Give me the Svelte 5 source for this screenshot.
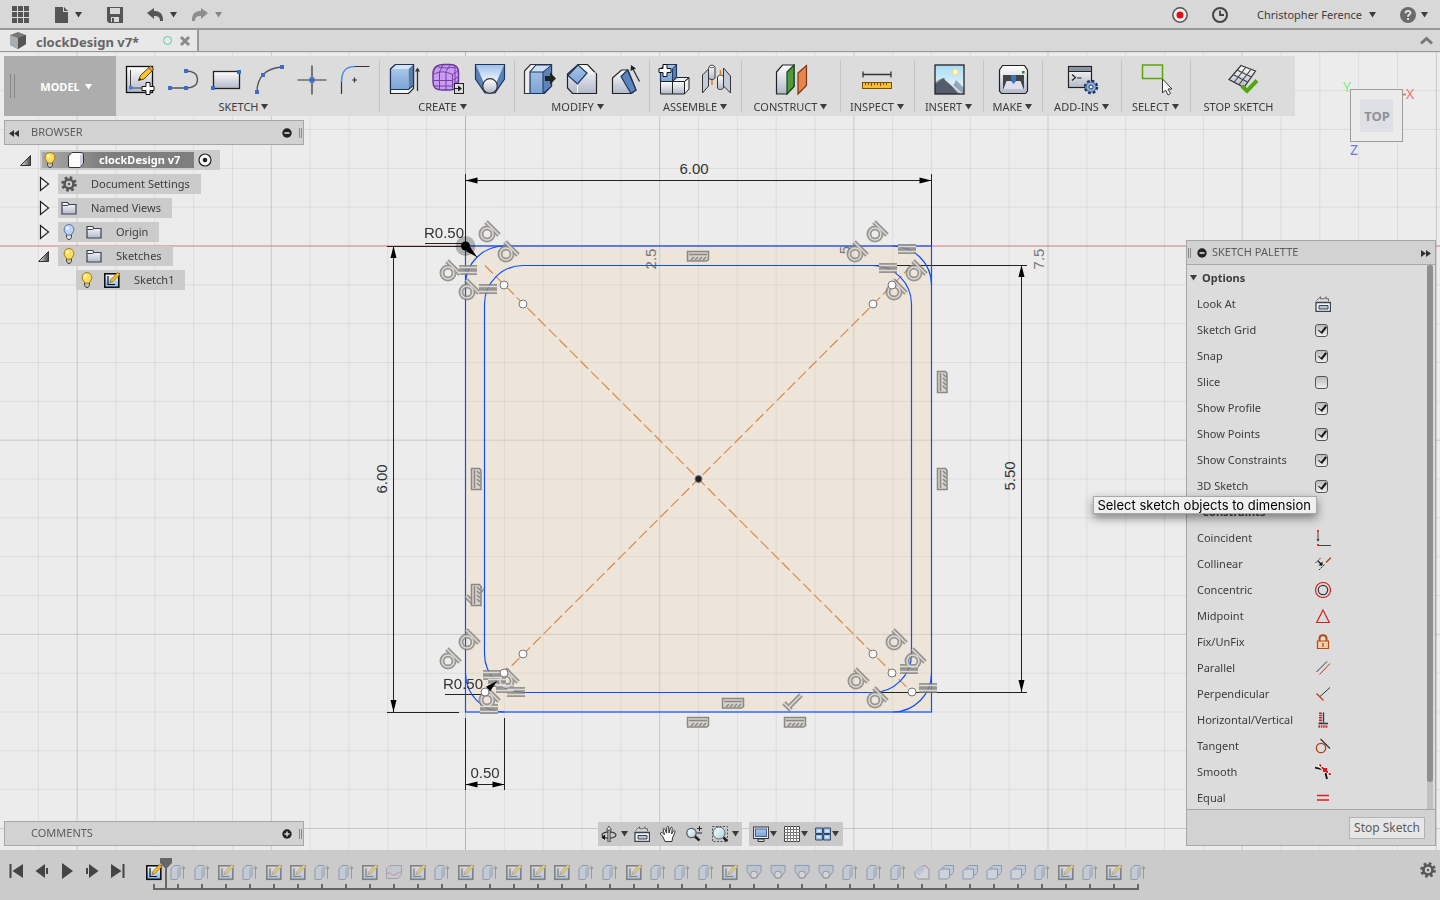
<script lang="ts">
	type Tool = { label: string; icons: string[]; width: number; menu: boolean };

	// 36x36 toolbar icons
	const tools: Record<string, string> = {
		sketch: `<rect x="4.500" y="4.500" width="26" height="26" fill="url(#steel)" stroke="#111" stroke-width="1.300"/><path d="M8.500 8v18H20" fill="none" stroke="#444"/><rect x="7" y="24" width="3.500" height="3.500" fill="#3d7de0"/><path d="M16.500 18.500l2-5L28 4.500l3.500 3-9.500 9.500z" fill="#ffc629" stroke="#5a4010"/><path d="M26.500 6l3.200 3 2-2-3.200-3z" fill="#d9a07c" stroke="#5a4010" stroke-width=".8"/><path d="M16.500 18.500l1-3 2 2z" fill="#222"/><path d="M24 20.500h4v4h4v4h-4v4h-4v-4h-4v-4h4z" fill="#fff" stroke="#111"/>`,
		line: `<path d="M5 26h16c6 0 11.500-2 11.500-8.500S27 9 21 9" fill="none" stroke="#555" stroke-width="1.300"/><path d="M3 24h4v4H3zM19 24h4v4h-4zM19 7h4v4h-4z" fill="#3d6ccc"/>`,
		rect: `<rect x="5.500" y="9.500" width="26" height="17" fill="url(#steel)" stroke="#222" stroke-width="1.300"/><path d="M3 24h4v4H3zM29 8h4v4h-4z" fill="#3d6ccc"/>`,
		arc: `<path d="M6 30C6 15 15 6 31 5" fill="none" stroke="#555" stroke-width="1.300"/><path d="M4 28h4v4H4zM10 11h4v4h-4zM29 3h4v4h-4z" fill="#3d6ccc"/>`,
		point: `<path d="M18 3.500v29M3.500 18h29" stroke="#333" stroke-width="1.200"/><rect x="15.500" y="15.500" width="5" height="5" fill="#3d6ccc"/>`,
		fillet: `<path d="M4.500 32V20M17 4.500h15.500" stroke="#333" stroke-width="1.200"/><path d="M4.500 20C4.500 10 8 4.500 18 4.500" fill="none" stroke="#4a90e8" stroke-width="1.600"/><path d="M17.500 15.500v5M15 18h5" stroke="#333" stroke-width="1.200"/>`,
		extrude: `<path d="M4.500 7l5-4.500h18v24l-5 5h-18z" fill="#f4f4f6" stroke="#222" stroke-width="1.200"/><path d="M4.500 7h18v20h-18z" fill="url(#blue)"/><path d="M4.500 7l5-4.500h18L22.500 7z" fill="#d5e5f6"/><path d="M22.500 7l5-4.500v20.500l-5 4.500z" fill="#587fae"/><path d="M4.500 7l5-4.500h18v21l-5 4H4.500z" fill="none" stroke="#1d3562" stroke-width="1.200"/><path d="M31.500 29V7" stroke="#333" stroke-width="1.300"/><path d="M29 9.500L31.500 5.500 34 9.500z" fill="#333"/>`,
		form: `<path d="M4 12c0-6 4-9.500 11-9.500h6c6 0 8.500 2.500 8.500 8V19c0 6-3 9-9 9h-7c-7 0-9.500-2.500-9.500-8z" fill="#c99cf2" stroke="#6a3a9a" stroke-width="1.500"/><path d="M4.500 12.500c6-3.500 12-3.500 19 0v14M10.500 9.500V28M17 9.500V28M5 18.500h18.500M5 24h18M9 5c5 1.500 12 1 19 0M23.500 12.500L29 9M23.500 18.500l6-4M23 24l6-5M14 3l-3.500 7M21 3l-4 6.500M26 5v20" fill="none" stroke="#7540a8"/><rect x="25.500" y="21.500" width="9" height="10" fill="#ddd" stroke="#222"/><path d="M26 26.500h4" stroke="#222"/><path d="M29 23.500l4 3-4 3z" fill="#222"/>`,
		loft: `<path d="M3.500 2.500h29V17L23 31H13L3.500 17z" fill="#5b82b8" stroke="#1d3562" stroke-width="1.200"/><path d="M4 3l8.500 19c3-5 8-5 11 0L32 3z" fill="url(#sky)"/><circle cx="18" cy="24" r="7.300" fill="url(#steel)" stroke="#333" stroke-width="1.200"/>`,
		press: `<path d="M3.500 9l6-6.500h21V24l-7 7.500h-20z" fill="#eee" stroke="#333" stroke-width="1.200"/><path d="M9 10l6-7h15.500V24l-8.500 7.500H9z" fill="url(#blue)" stroke="#1d3562" stroke-width="1.200"/><path d="M22 10l8.500-7.500V24L22 31.500z" fill="#5d84b8" stroke="#1d3562"/><path d="M9 10l6-7h15.500L22 10z" fill="#cfe0f4" stroke="#1d3562"/><path d="M24 14h5v-3.500l6 6-6 6V19h-5z" fill="#222"/>`,
		chamfer: `<path d="M3.500 12v14l5 5.500h24V12l-9-9.500H14z" fill="url(#steel)" stroke="#222" stroke-width="1.200"/><path d="M13.500 22v9M22.500 11h9.500" stroke="#fff"/><path d="M4 13.500L14 3l9 8-9.500 11z" fill="url(#blue)" stroke="#1d3562" stroke-width="1.200"/>`,
		draft: `<path d="M5.500 16l9-8H21l8 20-4.500 3.500h-19z" fill="url(#steel)" stroke="#222" stroke-width="1.200"/><path d="M14 14.500L20.500 8 29 28l-5 3.500z" fill="#5d84b8" stroke="#1d3562" stroke-width="1.200"/><path d="M32.500 19.500L26 7" stroke="#333" stroke-width="1.300"/><path d="M23.500 9L24 3l5 3.500z" fill="#222"/>`,
		component: `<path d="M4.500 7l5-4.500h11v12l-4 5h-12z" fill="url(#blue)" stroke="#1d3562" stroke-width="1.200"/><path d="M16.500 7l4-4.500v12l-4 5z" fill="#587fae" stroke="#1d3562"/><path d="M4.500 19.500h12V32h-12zM16.500 19.500h12V32h-12z" fill="url(#steel)" stroke="#222"/><path d="M16.500 19.500l4.500-4h12l-4.500 4zM28.500 19.500l4.500-4V27l-4.500 5z" fill="#f2f2f5" stroke="#222"/><path d="M7 2.500h4v4h4v4h-4v4H7v-4H3v-4h4z" fill="#fff" stroke="#111"/>`,
		joint: `<path d="M3.500 13l6-6v17l-6 7z" fill="#c3cad8" stroke="#333"/><path d="M9.500 6.500c1-4 6-4 6.500-1V16c-1 2-5 2-6.500 0z" fill="url(#steel)" stroke="#333"/><ellipse cx="12.800" cy="4.500" rx="2.500" ry="1.300" fill="#fff" stroke="#333" stroke-width=".8"/><path d="M13 18v5" stroke="#e87a1e" stroke-width="1.500"/><path d="M18.500 16c0-3.500 5-4 6-1v11c-1.500 2-5 2-6 0z" fill="url(#steel)" stroke="#333"/><path d="M21.500 8v5" stroke="#e87a1e" stroke-width="1.500"/><path d="M24.500 6l7 8v17l-7-7z" fill="#c3cad8" stroke="#333"/>`,
		plane: `<path d="M3.500 10l6-7H21v21.500L14 32H3.500z" fill="url(#steel)" stroke="#222" stroke-width="1.200"/><path d="M14 10l7-7v21.500L14 32z" fill="#4f9a3c" stroke="#17461a" stroke-width="1.200"/><path d="M25 11l8.500-7.500v20L25 32z" fill="#e8864a" stroke="#7c3410" stroke-width="1.200"/>`,
		ruler: `<path d="M4 9.500v6M32 9.500v6M4 12.500h28" stroke="#333" stroke-width="1.300"/><rect x="3.500" y="20.500" width="29" height="6" fill="#f6be32" stroke="#7a4f08"/><path d="M6.500 21v2M9.500 21v2M12.500 21v3M15.500 21v2M18.500 21v2M21.500 21v3M24.500 21v2M27.500 21v2" stroke="#7a4f08"/>`,
		picture: `<rect x="4" y="3" width="29" height="29" fill="url(#sky2)"/><circle cx="24.500" cy="10" r="3" fill="#fff8c8" stroke="#f8d58c"/><path d="M4 20l5-3 5-1 8 8 3-6 8 8v6H4z" fill="#94a6ba"/><path d="M4 22l8-6 9 8 6 8H4z" fill="#555d6b"/><path d="M14 17l17 15" stroke="#dfe8f0" stroke-width="1.500"/><rect x="4" y="3" width="29" height="29" fill="none" stroke="#222" stroke-width="1.300"/>`,
		printer: `<path d="M4.500 8l3-4.500h22l3 4.500v21l-2 2.500h-24l-2-2.500z" fill="url(#steel)" stroke="#222" stroke-width="1.200"/><rect x="8" y="13" width="21" height="14" fill="#444"/><path d="M11.500 19h14l3 8h-20z" fill="#dde"/><path d="M16 13h5v6l-2.500 3-2.500-3z" fill="#3474c4"/><rect x="27" y="9" width="2.500" height="2.500" fill="#1c8a1c"/>`,
		addins: `<rect x="4.500" y="4.500" width="23" height="21" fill="url(#steel)" stroke="#222" stroke-width="1.200"/><path d="M4.500 4.500h23v5h-23z" fill="#8b93a4" stroke="#222"/><path d="M8 12.500l3.500 3L8 18.500M13 16h4.500" fill="none" stroke="#222" stroke-width="1.200"/><circle cx="27" cy="25" r="6" fill="#9db9e6" stroke="#1d3562" stroke-width="2.500" stroke-dasharray="2.700 2"/><circle cx="27" cy="25" r="5" fill="#8eaee2" stroke="#1d3562" stroke-width=".6"/><circle cx="27" cy="25" r="2" fill="#fff" stroke="#1d3562"/>`,
		select: `<rect x="4.500" y="3" width="20" height="13.500" fill="none" stroke="#5aa60a" stroke-width="1.500"/><path d="M24.500 17v14l3-3 2.500 5 2.500-1.500L30 27h4z" fill="#fff" stroke="#333"/>`,
		finish: `<path d="M16 3.500L30.500 9 19 25.500 4 17.500z" fill="url(#steel)" stroke="#333" stroke-width="1.200"/><path d="M21 5L9 20.500M26 7.500L14 22.500M12 8l14.500 7M8 12.500l14.500 7.500" stroke="#444" stroke-width="1.200"/><path d="M17 24l5 5L32 18.500" fill="none" stroke="#55a510" stroke-width="4"/>`
	};

	const groups: Tool[] = [
		{ label: 'SKETCH', icons: ['sketch', 'line', 'rect', 'arc', 'point', 'fillet'], width: 263, menu: true },
		{ label: 'CREATE', icons: ['extrude', 'form', 'loft'], width: 135, menu: true },
		{ label: 'MODIFY', icons: ['press', 'chamfer', 'draft'], width: 135, menu: true },
		{ label: 'ASSEMBLE', icons: ['component', 'joint'], width: 92, menu: true },
		{ label: 'CONSTRUCT', icons: ['plane'], width: 99, menu: true },
		{ label: 'INSPECT', icons: ['ruler'], width: 74, menu: true },
		{ label: 'INSERT', icons: ['picture'], width: 69, menu: true },
		{ label: 'MAKE', icons: ['printer'], width: 59, menu: true },
		{ label: 'ADD-INS', icons: ['addins'], width: 79, menu: true },
		{ label: 'SELECT', icons: ['select'], width: 69, menu: true },
		{ label: 'STOP SKETCH', icons: ['finish'], width: 105, menu: false }
	];

	// 16x16 icons
	const small: Record<string, string> = {
		apps: `<path d="M0 0h5v5H0zM6 0h5v5H6zM12 0h5v5h-5zM0 6h5v5H0zM6 6h5v5H6zM12 6h5v5h-5zM0 12h5v5H0zM6 12h5v5H6zM12 12h5v5h-5z" fill="#555"/>`,
		file: `<path d="M1 0h8v5h5v11H1zM10 0l4 4h-4z" fill="#555"/>`,
		save: `<path d="M0 0h16v16H2l-2-2z" fill="#555"/><path d="M3 1h10v6H3zM4 10h8v5H4z" fill="#d8d8d8"/><path d="M5 11h2v4H5z" fill="#555"/>`,
		undo: `<path d="M0 6l7-5v3c5 0 9 2 9 9v1h-3c0-4-2-5-6-5v3z" fill="#555"/>`,
		redo: `<path d="M16 6L9 1v3c-5 0-9 2-9 9v1h3c0-4 2-5 6-5v3z" fill="#8d8d8d"/>`,
		record: `<circle cx="8" cy="8" r="7.200" fill="#eee" stroke="#555" stroke-width="1.500"/><circle cx="8" cy="8" r="3.500" fill="#e01010"/>`,
		clock: `<circle cx="8" cy="8" r="7" fill="none" stroke="#444" stroke-width="2"/><path d="M8 3.500V8h4" fill="none" stroke="#444" stroke-width="1.800"/>`,
		help: `<circle cx="8" cy="8" r="8" fill="#6b6b6b"/><path d="M5.500 6.300C5.500 3 10.800 3.200 10.500 6c-.2 1.700-2.500 1.600-2.500 3.700M8 11v2" fill="none" stroke="#e4e4e4" stroke-width="1.900"/>`,
		cube: `<path d="M0 3l8-3 8 3v9l-8 5-8-4z" fill="#777"/><path d="M0 3l8 3v11l-8-4z" fill="#a8adb2"/><path d="M8 6l8-3v9l-8 5z" fill="#555"/>`,
		close: `<path d="M4 4l8 8M12 4l-8 8" stroke="#8a8a8a" stroke-width="3"/>`,
		bulb: `<path d="M5.500 10.500h5v3l-1.500 2h-2l-1.500-2z" fill="#bbb" stroke="#444"/><path d="M8 .5a5 5 0 0 1 3.500 8.500L10 11H6L4.500 9A5 5 0 0 1 8 .5z" fill="#fde05a" stroke="#a8780c"/><circle cx="6.500" cy="4" r="1.800" fill="#fff6b8"/>`,
		bulbOff: `<path d="M5.500 10.500h5v3l-1.500 2h-2l-1.500-2z" fill="#ddd" stroke="#444"/><path d="M8 .5a5 5 0 0 1 3.500 8.500L10 11H6L4.500 9A5 5 0 0 1 8 .5z" fill="#c0d4fa" stroke="#5472b0"/><circle cx="6.500" cy="4" r="1.800" fill="#eef4ff"/>`,
		body: `<path d="M.5 4l3.500-3.500h9q2.500 0 2.500 2.500v8L12 15.500H2Q.5 15.500.5 14z" fill="#fbfbfb" stroke="#333"/><path d="M12 4l3-2.500V11l-3 4z" fill="#ccd"/>`,
		gear: `<circle cx="8" cy="8" r="6.500" fill="none" stroke="#555" stroke-width="2.600" stroke-dasharray="2.600 2.500"/><circle cx="8" cy="8" r="4.500" fill="none" stroke="#555" stroke-width="2.600"/><circle cx="8" cy="8" r="1.200" fill="#555"/>`,
		folder: `<path d="M1 14V2.500h5.500l1.500 2h7V14z" fill="url(#steel)" stroke="#3a4252" stroke-width="1.200"/><path d="M1.500 5.500h5l1.500-1" fill="none" stroke="#3a4252"/>`,
		pencil: `<rect x=".8" y="1.800" width="14" height="13.500" fill="url(#sheet)" stroke="#111" stroke-width="1.600"/><path d="M4 4v8.500h7" fill="none" stroke="#111" stroke-width="1.200"/><path d="M6 10.500l1-3L13.500.5 16 2.500 9 9.500z" fill="#f8c020" stroke="#8a5a10" stroke-width=".7"/>`,
		box: `<path d="M1 5l3-3.500h6V12l-3 3.500H1z" fill="#b8cde6" stroke="#3d5478"/><path d="M7 5l3-3.500V12l-3 3.500z" fill="#7f9dc4"/><path d="M13.500 15V4" stroke="#555"/><path d="M11.500 5l2-3.500 2 3.500z" fill="#555"/>`,
		split: `<path d="M.5 5L4 1.500h11.500v9L12 14.500H.5z" fill="#b4c4d8" stroke="#667"/><path d="M1 10c3-4 5 3 8 1s4-3 6-3" fill="none" stroke="#e03030"/>`,
		taper: `<path d="M1 1.500h14v6L10.500 14h-5L1 7.500z" fill="#a8c0e0" stroke="#3d5478"/><circle cx="8" cy="10.500" r="3.500" fill="#e6e6ea" stroke="#445"/>`,
		round: `<path d="M1 8l7-6h4l3 4v9H4l-3-3z" fill="#dfe3ea" stroke="#445"/><path d="M1 8l7-6 3 3-6 7z" fill="#a8c0e0"/>`,
		combine: `<path d="M4.500 4L7 1.500h8.500v7L13 11H4.500z" fill="#a8c8ee" stroke="#2c4f88"/><path d="M1 7l2-2h8.500v8l-2 2H1z" fill="#cfe0f4" stroke="#2c4f88"/>`,
		lookat: `<path d="M1 6.500h14.500v9H1z" fill="#f6f7fa" stroke="#3a4252" stroke-width="1.300"/><path d="M4 9.500h9v3.500H4z" fill="#b8c4d4" stroke="#3a4252"/><path d="M1.500 4.500L5.500.8v2h4l1.500-2v2h2.500V5" fill="#ddd" stroke="#666"/>`,
		coincident: `<path d="M3 1.500v9M3 15.500h13" stroke="#444"/><path d="M2 0h2v2H2zM2 14h2v2H2z" fill="#f03010"/><path d="M1.500 9h3L3 12z" fill="#444"/>`,
		collinear: `<path d="M.5 7L6 1.500M4 14L10 8" stroke="#333" stroke-dasharray="2 .6"/><path d="M11 6.500L16 1.500" stroke="#b83c0c" stroke-width="1.300"/><path d="M3 5l4 4" stroke="#111" stroke-width="1.300"/><path d="M7.500 5.500v4h-4z" fill="#111"/>`,
		concentric: `<circle cx="8" cy="8" r="7.500" fill="none" stroke="#d82020" stroke-width="1.200"/><circle cx="8" cy="8" r="4.700" fill="none" stroke="#334" stroke-width="1.200"/>`,
		midpoint: `<path d="M8 2L1.700 14.500h12.600z" fill="none" stroke="#d82020" stroke-width="1.200"/>`,
		fix: `<path d="M4.500 7V4.500c0-4.500 7-4.500 7 0V7" fill="none" stroke="#b84a14" stroke-width="2"/><path d="M2.500 7h11v7.500h-11z" fill="#f8d0a8" stroke="#b84a14" stroke-width="1.200"/><path d="M8 9v4" stroke="#b84a14" stroke-width="1.300"/>`,
		parallel: `<path d="M1.500 12L12 1.500" stroke="#334"/><path d="M4.500 14.500l10.500-11" stroke="#b83c0c"/>`,
		perpendicular: `<path d="M5 10.500L15 1.500" stroke="#334"/><path d="M1.500 7.500l7 7" stroke="#b83c0c" stroke-width="1.200"/>`,
		horizontal: `<path d="M8.500.5v10M3.500 11.500h9.500" stroke="#334" stroke-width="1.300"/><path d="M5.500.5v10" stroke="#d82020" stroke-width="3" stroke-dasharray="1.500 .8"/><path d="M3.500 14.500H13" stroke="#d82020" stroke-width="2.500" stroke-dasharray="1.500 .8"/>`,
		tangent: `<circle cx="6" cy="10" r="4.700" fill="none" stroke="#b83c0c" stroke-width="1.200"/><path d="M5.500 1l9.500 9.500" stroke="#334" stroke-width="1.200"/>`,
		smooth: `<path d="M0 3.500l8 2" stroke="#111" stroke-width="1.800"/><path d="M4 .5l5 5M11 7l5 4" stroke="#fff" stroke-width="3.500"/><path d="M4.500 .5l4.500 5M11 7l5 4" stroke="#c01010" stroke-width="1.800" stroke-dasharray="2.500 1"/><path d="M10.500 9l1.500 6" stroke="#111" stroke-width="1.800"/><rect x="8" y="4" width="4" height="4" fill="#f01010"/>`,
		equal: `<path d="M2 5.500h12M2 10h12" stroke="#d82020" stroke-width="1.300"/>`,
		orbit: `<ellipse cx="8" cy="9" rx="7" ry="3.200" fill="none" stroke="#333" stroke-width="1.200"/><path d="M7 3h2v13H7z" fill="#fff" stroke="#333"/><path d="M5.500 4L8 0l2.500 4z" fill="#fff" stroke="#333" stroke-width=".8"/><path d="M4 8.500L.5 11.500 4 14z" fill="#111"/>`,
		hand: `<path d="M5 15.500L3 11 .5 8c-.5-1.500 1-2 2-1l2 1.500L3 3.500c0-1.500 1.500-1.500 2 0L6.500 7 6.800 1.500c.2-1.500 1.700-1.500 1.800 0L9 7l1.500-5c.5-1.300 2-.8 1.800.5L11.500 8l2-3c.8-1 2-.3 1.500 1L12.500 12l-.5 3.500z" fill="#fff" stroke="#333"/>`,
		zoom: `<circle cx="5.500" cy="7" r="4.700" fill="url(#lens)" stroke="#556" stroke-width="1.200"/><path d="M9 10.500l4.500 4" stroke="#222" stroke-width="2.500"/><path d="M13.500 0v5M11 2.500h5M11 7h5" stroke="#222"/>`,
		fit: `<rect x=".5" y=".5" width="15" height="15" fill="none" stroke="#555" stroke-dasharray="2 1.500"/><circle cx="7" cy="7" r="6" fill="url(#lens)" stroke="#667"/><path d="M11.500 11.500L15 15" stroke="#222" stroke-width="2.500"/>`,
		display: `<rect x=".6" y="1" width="15" height="11.500" fill="#eef" stroke="#333"/><rect x="2.500" y="3" width="11" height="7.500" fill="url(#blue)" stroke="#47628e"/><path d="M5 13h6v2.500H5z" fill="#ddd" stroke="#333"/>`,
		grid: `<path d="M.5.500h15v15H.5z" fill="#fff" stroke="#444"/><path d="M3.500 0v16M6.500 0v16M9.500 0v16M12.500 0v16M0 3.500h16M0 6.500h16M0 9.500h16M0 12.500h16" stroke="#777"/>`,
		views: `<path d="M.6 2h7v5.500h-7zM8.600 2h7v5.500h-7zM.6 8.500h7V14h-7zM8.600 8.500h7V14h-7z" fill="#a6c4ea" stroke="#2c4468"/><path d="M2.500 4h3v2h-3zM10.500 4h3v2h-3zM2.500 10h3v2h-3zM10.500 10h3v2h-3z" fill="#d8e8fa"/>`,
		first: `<path d="M1.500 1v14" stroke="#444" stroke-width="2"/><path d="M14 1v14L3.500 8z" fill="#444"/>`,
		prev: `<path d="M11 1v14L1.500 8z" fill="#444"/><path d="M13 5v6" stroke="#444" stroke-width="2"/>`,
		play: `<path d="M3 0v16l11-8z" fill="#444"/>`,
		next: `<path d="M5 1v14l9.500-7z" fill="#444"/><path d="M3 5v6" stroke="#444" stroke-width="2"/>`,
		last: `<path d="M14.500 1v14" stroke="#444" stroke-width="2"/><path d="M2 1v14l10.500-7z" fill="#444"/>`,
		rewind: `<path d="M7 5v7L2 8.500zM12 5v7L7 8.500z" fill="#333"/>`,
		forward: `<path d="M3 5v7l5-3.500zM8 5v7l5-3.500z" fill="#333"/>`,
		minus: `<circle cx="8" cy="8" r="4.700" fill="#222"/><path d="M5.500 8h5" stroke="#ddd" stroke-width="1.600"/>`,
		plus: `<circle cx="8" cy="8" r="4.700" fill="#222"/><path d="M5.500 8h5M8 5.500v5" stroke="#ddd" stroke-width="1.400"/>`,
		open: `<path d="M2.500 13.500h10v-10z" fill="url(#dark)" stroke="#333"/>`,
		closed: `<path d="M4.500 1.500v13l8-6.500z" fill="#f4f4f4" stroke="#222" stroke-width="1.200"/>`,
		active: `<circle cx="8" cy="8" r="6" fill="#f6f6f6" stroke="#222" stroke-width="1.200"/><circle cx="8" cy="8" r="2.300" fill="#222"/>`,
		up: `<path d="M2 10.500l5.500-5 5.500 5" fill="none" stroke="#777" stroke-width="3"/>`
	};

	const tree = [
		{ label: 'Document Settings', icons: ['gear'], toggle: 'closed', depth: 1 },
		{ label: 'Named Views', icons: ['folder'], toggle: 'closed', depth: 1 },
		{ label: 'Origin', icons: ['bulbOff', 'folder'], toggle: 'closed', depth: 1 },
		{ label: 'Sketches', icons: ['bulb', 'folder'], toggle: 'open', depth: 1 },
		{ label: 'Sketch1', icons: ['bulb', 'pencil'], toggle: '', depth: 2 }
	];

	let options = $state([
		{ label: 'Sketch Grid', on: true },
		{ label: 'Snap', on: true },
		{ label: 'Slice', on: false },
		{ label: 'Show Profile', on: true },
		{ label: 'Show Points', on: true },
		{ label: 'Show Constraints', on: true },
		{ label: '3D Sketch', on: true }
	]);

	const constraints = [
		['Coincident', 'coincident'],
		['Collinear', 'collinear'],
		['Concentric', 'concentric'],
		['Midpoint', 'midpoint'],
		['Fix/UnFix', 'fix'],
		['Parallel', 'parallel'],
		['Perpendicular', 'perpendicular'],
		['Horizontal/Vertical', 'horizontal'],
		['Tangent', 'tangent'],
		['Smooth', 'smooth'],
		['Equal', 'equal']
	];

	// s = sketch, e = extrude, p = split, t = taper, r = round, c = combine
	const kinds: Record<string, string> = { s: 'pencil', e: 'box', p: 'split', t: 'taper', r: 'round', c: 'combine' };
	const features = [...'seesesseespsesessseeseeestttteeerccccesese'];

	// Sketch space: 0.5 unit grid, origin in canvas pixels
	const ox = 465.5;
	const oy = 194;
	const step = 466 / 12;
	const range = (from: number, to: number) => Array.from({ length: to - from + 1 }, (_, i) => from + i);
	const cols = range(-12, 60);
	const rows = range(-5, 30);

	const tangents = [
		[487, 182], [506, 202], [448, 221], [467, 240],
		[875, 182], [855, 202], [914, 221], [894, 240],
		[467, 590], [448, 609], [506, 629], [487, 648],
		[894, 590], [913, 609], [856, 629], [875, 648]
	];
	const equals = [
		[468, 218], [488, 237], [907, 197], [888, 216], [909, 617], [928, 636],
		[492, 623], [497, 630], [505, 636], [516, 640], [489, 657]
	];
	const levels = [[698, 204], [698, 670], [733, 651], [795, 670]];
	const plumbs = [[476, 427], [942, 330], [942, 427], [476, 543]];
	const perps = [[474, 544], [792, 651]];
	const points = [
		[504, 233], [523, 252], [892, 233], [873, 252], [523, 602],
		[504, 621], [485, 640], [873, 602], [892, 621], [912, 640]
	];
</script>

{#snippet icon(name: string, size = 16)}
	<svg class="icon" width={size} height={size} viewBox="0 0 16 16" aria-hidden="true">{@html small[name]}</svg>
{/snippet}

{#snippet caret()}
	<svg class="caret" width="7" height="6" viewBox="0 0 7 6" aria-hidden="true"><path d="M0 0h7L3.500 5.500z" fill="currentColor" /></svg>
{/snippet}

{#snippet arrow(x: number, y: number, angle: number)}
	<path d="M0 0l-12-3v6z" transform="translate({x} {y}) rotate({angle})" />
{/snippet}

<div class="app">
	<header class="topbar">
		<div class="left">
			<button class="apps" aria-label="Data panel"><svg width="17" height="17" aria-hidden="true">{@html small.apps}</svg></button>
			<button class="file" aria-label="File">{@render icon('file')}{@render caret()}</button>
			<button class="save" aria-label="Save">{@render icon('save')}</button>
			<button class="undo" aria-label="Undo">{@render icon('undo')}{@render caret()}</button>
			<button class="redo" aria-label="Redo">{@render icon('redo')}{@render caret()}</button>
		</div>
		<div class="right">
			<button aria-label="Record">{@render icon('record')}</button>
			<button aria-label="Job status">{@render icon('clock')}</button>
			<button class="user">Christopher Ference {@render caret()}</button>
			<button class="help" aria-label="Help">{@render icon('help')}{@render caret()}</button>
		</div>
	</header>

	<div class="tabs">
		<div class="tab">
			<svg width="16" height="17" aria-hidden="true">{@html small.cube}</svg>
			<span>clockDesign v7*</span>
			<i class="dot"></i>
			<button aria-label="Close tab">{@render icon('close')}</button>
		</div>
		<button class="collapse" aria-label="Collapse tabs">{@render icon('up')}</button>
	</div>

	<main>
		<svg class="canvas" width="100%" height="100%">
			<defs>
				<linearGradient id="steel" x2="0" y2="1"><stop stop-color="#fff" /><stop offset="1" stop-color="#b2b8c8" /></linearGradient>
				<linearGradient id="blue" x2="0" y2="1"><stop stop-color="#a9c6ea" /><stop offset="1" stop-color="#7ba4d6" /></linearGradient>
				<linearGradient id="sky" x2="0" y2="1"><stop stop-color="#9ec0ea" /><stop offset="1" stop-color="#fff" /></linearGradient>
				<linearGradient id="sky2" x2="0" y2="1"><stop stop-color="#a8dcf6" /><stop offset="1" stop-color="#f4fafc" /></linearGradient>
				<linearGradient id="sheet" x2="0" y2="1"><stop stop-color="#fff" /><stop offset="1" stop-color="#7db4ee" /></linearGradient>
				<linearGradient id="lens" x2="1" y2="1"><stop stop-color="#fff" /><stop offset="1" stop-color="#a9cfd8" /></linearGradient>
				<linearGradient id="dark"><stop stop-color="#eee" /><stop offset="1" stop-color="#444" /></linearGradient>
				<g id="tangent"><circle r="6" /><path d="M-1-12L12 1" /></g>
				<g id="equal"><path d="M-9-2.500H9M-9 2.500H9" /></g>
				<g id="level"><path d="M-10.500-4.500h21v8l-2 1.500h-19z" /><path d="M-9-1.500H9M-7 4l3-3M-3 4l3-3M1 4l3-3M5 4l3-3" /></g>
				<g id="perp"><path d="M9-8L-3 4M-8 0l7 7" /></g>
			</defs>

			<g class="lines">
				{#each cols as i (i)}
					<line class:major={i % 5 === 0} x1={ox + i * step} x2={ox + i * step} y1="0" y2="100%" />
				{/each}
				{#each rows as i (i)}
					<line class:major={i % 5 === 0} x1="0" x2="100%" y1={oy + i * step} y2={oy + i * step} />
				{/each}
			</g>
			<line class="axis-x" x1="0" x2="100%" y1={oy} y2={oy} />
			<line class="axis-y" x1={ox} x2={ox} y1="0" y2="100%" />

			<rect class="profile" x={ox} y={oy} width="466" height="466" />

			<g class="ticks">
				<text transform="translate(656 207) rotate(-90)">2.5</text>
				<text transform="translate(850 198) rotate(-90)">5</text>
				<text transform="translate(1044 207) rotate(-90)">7.5</text>
			</g>

			<g class="diagonals">
				<path d="M485 213.500L912 640.500M912 213.500L485 640.500" />
			</g>

			<g class="dims">
				<path d="M465.500 122v72M931.500 122v72M465.500 128.500h466" />
				<path d="M387 194.500h78M387 660.500h72M393.500 194v466" />
				<path d="M873 213.500h154M873 640.500h154M1021.500 213v427" />
				<path d="M465.500 666v72M504.500 666v72M465.500 732.500h39" />
				<path d="M425 191.500h40M445 642.500h40M465 194l12 11M485 640l12-11" />
			</g>

			<g class="curves">
				<rect x={ox} y="194" width="466" height="466" />
				<rect x="484.500" y="213.500" width="427" height="427" rx="38.800" />
				<path d="M465.500 233A38.800 38.800 0 0 1 504 194M893 194a38.800 38.800 0 0 1 38.500 39M465.500 621a38.800 38.800 0 0 0 39 39M893 660a38.800 38.800 0 0 0 38.500-39" />
			</g>

			{#each ['halo', 'core'] as layer (layer)}
				<g class="marks {layer}">
					{#each tangents as [x, y]}<use href="#tangent" {x} {y} />{/each}
					{#each equals as [x, y]}<use href="#equal" {x} {y} />{/each}
					{#each perps as [x, y]}<use href="#perp" {x} {y} />{/each}
				</g>
			{/each}
			<g class="ground">
				{#each levels as [x, y]}<use href="#level" {x} {y} />{/each}
				{#each plumbs as [x, y]}<use href="#level" transform="translate({x} {y}) rotate(-90)" />{/each}
			</g>

			<g class="heads">
				{@render arrow(465.5, 128.5, 180)}
				{@render arrow(931.5, 128.5, 0)}
				{@render arrow(393.5, 194, -90)}
				{@render arrow(393.5, 660, 90)}
				{@render arrow(1021.5, 213, -90)}
				{@render arrow(1021.5, 640, 90)}
				{@render arrow(465.5, 732.5, 180)}
				{@render arrow(504.5, 732.5, 0)}
				{@render arrow(477, 205, 42)}
				{@render arrow(497, 629, -42)}
			</g>

			<g class="values">
				<text x="694" y="122">6.00</text>
				<text transform="translate(387 427) rotate(-90)">6.00</text>
				<text transform="translate(1015 424) rotate(-90)">5.50</text>
				<text x="485" y="726">0.50</text>
				<text x="444" y="186">R0.50</text>
				<text x="463" y="637">R0.50</text>
			</g>

			{#each points as [x, y]}<circle class="point" cx={x} cy={y} r="4" />{/each}
			<circle cx="465.500" cy="194" r="10" fill="#000" opacity=".25" />
			<circle cx="465.500" cy="194" r="4.500" />
			<circle cx="698.500" cy="427" r="3.500" fill="#222" stroke="#777" />
		</svg>

		<div class="toolbar">
			<button class="workspace"><span>MODEL</span>{@render caret()}</button>
			{#each groups as g (g.label)}
				<div class="group" class:shifted={g.icons.length > 2 || !g.menu} style="width: {g.width}px">
					<div class="row">
						{#each g.icons as name (name)}
							<button aria-label={name}><svg class="tool" width="36" height="36" viewBox="0 0 36 36" aria-hidden="true">{@html tools[name]}</svg></button>
						{/each}
					</div>
					<button class="caption">{g.label}{#if g.menu}{@render caret()}{/if}</button>
				</div>
			{/each}
		</div>

		<svg class="viewcube" width="78" height="84" role="img" aria-label="View cube">
			<text x="3" y="16" fill="#7dee7d">Y</text>
			<text x="66" y="23" fill="#f47474">X</text>
			<text x="10" y="79" fill="#7474ee">Z</text>
			<path d="M62 18.500h4" stroke="#f47474" stroke-width="2" />
			<rect x="10.500" y="13.500" width="52" height="52" fill="#ebebeb" stroke="#9c9c9c" />
			<rect x="20" y="23" width="33" height="33" fill="#dfe0e5" />
			<text class="face" x="37" y="45" text-anchor="middle">TOP</text>
		</svg>

		<div class="panels">
			<div class="side">
				<section class="browser">
					<div class="bar">
						{@render icon('rewind')}
						<h2>BROWSER</h2>
						<button aria-label="Collapse browser">{@render icon('minus')}</button>
						<i class="grip"></i>
					</div>
					<ul>
						<li class="root">
							<button class="toggle" aria-label="Collapse">{@render icon('open')}</button>
							<div class="node"><span class="current">{@render icon('bulb')}{@render icon('body')}<b>clockDesign v7</b></span>{@render icon('active')}</div>
						</li>
						{#each tree as n (n.label)}
							<li class="depth{n.depth}">
								{#if n.toggle}<button class="toggle" aria-label="Toggle {n.label}">{@render icon(n.toggle)}</button>{/if}
								<div class="node">{#each n.icons as name (name)}{@render icon(name)}{/each}<span>{n.label}</span></div>
							</li>
						{/each}
					</ul>
				</section>
				<section class="bar comments">
					<h2>COMMENTS</h2>
					<button aria-label="Expand comments">{@render icon('plus')}</button>
					<i class="grip"></i>
				</section>
			</div>

			<nav>
				<div class="nav">
					<button class="orbit" aria-label="Orbit">{@render icon('orbit')}{@render caret()}</button>
					<button aria-label="Look at">{@render icon('lookat')}</button>
					<button aria-label="Pan">{@render icon('hand')}</button>
					<button aria-label="Zoom">{@render icon('zoom')}</button>
					<button aria-label="Fit">{@render icon('fit')}{@render caret()}</button>
				</div>
				<div class="nav tight">
					<button aria-label="Display settings">{@render icon('display')}{@render caret()}</button>
					<button aria-label="Grid and snaps">{@render icon('grid')}{@render caret()}</button>
					<button aria-label="Viewports">{@render icon('views')}{@render caret()}</button>
				</div>
			</nav>

			<aside class="palette">
				<div class="bar">
					<i class="grip"></i>
					<button aria-label="Collapse palette">{@render icon('minus')}</button>
					<h2>SKETCH PALETTE</h2>
					{@render icon('forward')}
				</div>
				<div class="body">
					<div class="list">
						<h3>{@render caret()}Options</h3>
						<button class="item"><span>Look At</span>{@render icon('lookat')}</button>
						{#each options as o (o.label)}
							<label class="item"><span>{o.label}</span><input type="checkbox" bind:checked={o.on} /></label>
						{/each}
						<h3>{@render caret()}Constraints</h3>
						{#each constraints as [label, name] (name)}
							<button class="item"><span>{label}</span>{@render icon(name)}</button>
						{/each}
					</div>
					<div class="scroll"><div class="thumb"></div></div>
				</div>
				<footer><button class="stop">Stop Sketch</button></footer>
				<div class="tooltip" role="tooltip">Select sketch objects to dimension</div>
			</aside>
		</div>
	</main>

	<div class="timeline">
		<div class="controls">
			{#each ['first', 'prev', 'play', 'next', 'last'] as name (name)}
				<button aria-label={name}>{@render icon(name)}</button>
			{/each}
		</div>
		<ol>
			{#each features as f, i}
				<li>
					<svg width="24" height="34" aria-hidden="true">
						<g transform="translate(4 6)" opacity={i ? 0.4 : 1}>{@html small[kinds[f]]}</g>
						<path d="M12 26v5M{i ? 0 : 11} 31h{i === features.length - 1 ? 13 : 24}" stroke="#666" stroke-width="2" fill="none" />
						{#if i === 1}<path d="M-6 0H6v5L1 10v21h-2V10l-5-5z" fill="#666" />{/if}
					</svg>
				</li>
			{/each}
		</ol>
		<button class="settings" aria-label="Timeline settings">{@render icon('gear')}</button>
	</div>
</div>

<style>
	:global(body) {
		margin: 0;
	}
	.app {
		height: 100vh;
		display: flex;
		flex-direction: column;
		overflow: hidden;
		font-family: 'Noto Sans', 'Open Sans', sans-serif;
		font-size: 11px;
		line-height: 16px;
		color: #3c3c3c;
		background: #ececec;
	}
	button {
		border: 0;
		padding: 0;
		margin: 0;
		background: none;
		font: inherit;
		color: inherit;
		display: flex;
		align-items: center;
		cursor: pointer;
	}
	svg {
		display: block;
		flex: none;
	}
	h2,
	h3,
	ul,
	ol {
		margin: 0;
		padding: 0;
		list-style: none;
		font-size: inherit;
		font-weight: normal;
	}

	.topbar {
		height: 27px;
		flex: none;
		display: flex;
		justify-content: space-between;
		align-items: center;
		padding: 1px 12px 0;
		background: #d8d8d8;
		border-bottom: 2px solid #999;
	}
	.left,
	.right {
		display: flex;
		align-items: center;
	}
	.left {
		gap: 25px;
	}
	.left button,
	.help {
		gap: 5px;
	}
	.left .undo,
	.left .redo {
		gap: 7px;
	}
	.left .undo {
		margin: 0 -10px 0 -1px;
	}
	.redo {
		color: #888;
	}
	.right {
		gap: 24px;
	}
	.user {
		gap: 7px;
		padding-left: 5px;
	}

	.tabs {
		height: 21px;
		flex: none;
		display: flex;
		justify-content: space-between;
		background: #d8d8d8;
		border-bottom: 1px solid #999;
	}
	.tab {
		display: flex;
		align-items: center;
		width: 187px;
		padding-left: 10px;
		background: #e8e8e8;
		border-right: 2px solid #999;
	}
	.tab span {
		flex: 1;
		padding: 2px 0 0 10px;
		font-size: 13px;
		font-weight: bold;
		color: #666;
		white-space: nowrap;
	}
	.tab .dot {
		width: 7px;
		height: 7px;
		border: 1px solid #5fc4a4;
		border-radius: 50%;
		margin-right: 5px;
	}
	.tab button {
		margin-right: 4px;
	}
	.collapse {
		padding-right: 5px;
	}

	main {
		position: relative;
		flex: 1;
		min-height: 0;
		display: flex;
		flex-direction: column;
	}
	.canvas {
		position: absolute;
		inset: 0;
	}
	.lines line {
		stroke: #000;
		stroke-opacity: 0.065;
	}
	.lines .major {
		stroke-opacity: 0.15;
	}
	.axis-x {
		stroke: #e48c8c;
	}
	.axis-y {
		stroke: #7ddc7d;
	}
	.profile {
		fill: rgba(243, 213, 176, 0.3);
	}
	.ticks text,
	.values text {
		font-family: 'Liberation Sans', Arial, sans-serif;
		font-size: 15px;
		text-anchor: middle;
	}
	.values text {
		fill: #333;
	}
	.ticks text {
		fill: #777;
	}
	.diagonals {
		stroke: #dd8a4c;
		stroke-dasharray: 11 4;
		stroke-width: 1.2;
	}
	.dims {
		stroke: #222;
		fill: none;
	}
	.curves {
		fill: none;
		stroke: #0a50ff;
		stroke-width: 1.2;
	}
	.marks {
		fill: none;
	}
	.marks.halo {
		stroke: #83817d;
		stroke-width: 5;
		opacity: 0.8;
	}
	.marks.core {
		stroke: #dddad5;
		stroke-width: 1.5;
	}
	.ground {
		fill: #d6d3ce;
		stroke: #8a8884;
		stroke-width: 1.5;
	}
	.point {
		fill: #fff;
		stroke: #777;
	}

	.toolbar {
		position: relative;
		align-self: flex-start;
		display: flex;
		margin: 4px 4px 0;
		background: #dcdcdc;
	}
	.workspace {
		width: 112px;
		justify-content: center;
		gap: 5px;
		padding: 2px 0 0 12px;
		box-sizing: border-box;
		background: linear-gradient(90deg, #888 1px, transparent 1px 4px, #888 4px 5px, transparent 5px) 6px 18px / 100% 24px no-repeat #adadad;
		color: #fff;
		font-weight: bold;
	}
	.group {
		position: relative;
		height: 60px;
		display: flex;
		flex-direction: column;
		align-items: center;
		box-sizing: border-box;
		padding-top: 6px;
	}
	.group + .group::before {
		content: '';
		position: absolute;
		left: 0;
		top: 4px;
		bottom: 4px;
		border-left: 1px solid #c4c4c4;
	}
	.row {
		display: flex;
		gap: 7px;
	}
	.caption {
		gap: 3px;
		padding-top: 1px;
		white-space: nowrap;
	}
	.shifted .caption {
		padding-right: 8px;
	}

	.viewcube {
		position: absolute;
		right: 22px;
		top: 24px;
		font-size: 14px;
	}
	.viewcube .face {
		font-size: 13px;
		font-weight: bold;
		fill: #8f9199;
	}

	.panels {
		position: relative;
		flex: 1;
		min-height: 0;
		display: grid;
		grid-template-columns: 1fr auto 1fr;
		padding: 4px;
	}
	.side {
		display: flex;
		flex-direction: column;
		justify-content: space-between;
		width: 300px;
	}
	.bar {
		display: flex;
		align-items: center;
		height: 23px;
		background: #d2d2d2;
		border: 1px solid #a6a6a6;
		color: #5c5c5c;
	}
	.bar h2 {
		flex: 1;
		padding-bottom: 2px;
	}
	.side .bar {
		padding-left: 2px;
	}
	.side h2 {
		padding-left: 8px;
	}
	.side .comments {
		padding-left: 18px;
	}
	.grip {
		width: 1px;
		height: 10px;
		border-left: 1px solid #888;
		border-right: 1px solid #888;
		margin: 0 1px 0 4px;
	}
	li {
		display: flex;
	}
	.browser li {
		height: 20px;
		margin-top: 4px;
		align-items: center;
	}
	.browser .root {
		margin-top: 5px;
		padding-left: 14px;
	}
	.toggle {
		margin-right: 6px;
	}
	.depth1 {
		padding-left: 32px;
	}
	.depth2 {
		padding-left: 72px;
	}
	.node {
		display: flex;
		align-items: center;
		gap: 9px;
		height: 20px;
		padding: 0 11px 0 3px;
		background: #cbcbcb;
	}
	.node > span:last-child {
		padding-left: 5px;
	}
	.root .node {
		gap: 3px;
		padding: 0 7px 0 2px;
	}
	.current {
		display: flex;
		align-items: center;
		gap: 10px;
		height: 16px;
		padding-right: 14px;
		background: linear-gradient(90deg, #aaa, #7e7e7e 40%);
		color: #fff;
	}
	.current b {
		padding-left: 5px;
	}

	nav {
		display: flex;
		align-self: end;
		gap: 7px;
	}
	.nav {
		display: flex;
		align-items: center;
		gap: 10px;
		height: 24px;
		padding: 0 3px;
		background: #c9c9c9;
	}
	.nav button {
		gap: 4px;
	}
	.nav .orbit {
		margin-right: -4px;
	}
	.nav.tight {
		gap: 7px;
		padding: 0 4px;
	}
	.nav.tight button {
		gap: 1px;
	}

	.palette {
		position: relative;
		justify-self: end;
		margin-top: 120px;
		width: 248px;
		min-height: 0;
		display: flex;
		flex-direction: column;
		border: 1px solid #a6a6a6;
		background: #dcdcdc;
	}
	.palette .bar {
		flex: none;
		border-width: 0 0 1px;
		padding-right: 1px;
	}
	.palette .grip {
		margin: 0 3px 0 1px;
	}
	.palette h2 {
		padding-left: 2px;
	}
	.body {
		flex: 1;
		min-height: 0;
		display: flex;
		overflow: hidden;
	}
	.list {
		flex: 1;
	}
	h3 {
		display: flex;
		align-items: center;
		gap: 5px;
		height: 26px;
		padding-left: 3px;
		font-weight: bold;
	}
	.item {
		display: flex;
		align-items: center;
		height: 26px;
	}
	.item span {
		width: 118px;
		padding-left: 10px;
		text-align: left;
	}
	input {
		appearance: none;
		width: 13px;
		height: 13px;
		margin: 0;
		border: 1px solid #555;
		border-radius: 3px;
		background: linear-gradient(#bbb, #eee);
	}
	input:checked::after {
		content: '';
		display: block;
		width: 3px;
		height: 7px;
		margin: 0 0 0 4px;
		border: solid #111;
		border-width: 0 2px 1px 0;
		transform: rotate(38deg);
	}
	.scroll {
		width: 6px;
		margin-right: 2px;
		background: #c0c0c0;
	}
	.thumb {
		height: 95%;
		border-radius: 3px;
		background: #8e8e8e;
	}
	footer {
		flex: none;
		display: flex;
		justify-content: flex-end;
		padding: 7px 10px 6px;
		border-top: 1px solid #a6a6a6;
		background: #d2d2d2;
	}
	.stop {
		height: 22px;
		padding: 0 4px;
		border: 1px solid #b4b4b4;
		background: #e6e6e6;
		color: #5c5c5c;
		font-size: 12px;
	}
	.tooltip {
		position: absolute;
		right: 118px;
		top: 255px;
		padding: 0 5px 0 3px;
		border: 1px solid #a8a8a8;
		background: #f0f0f0;
		box-shadow: 0 4px 10px rgba(0, 0, 0, 0.45);
		color: #000;
		font-family: Inter, Roboto, sans-serif;
		font-size: 13px;
		white-space: nowrap;
	}

	.timeline {
		flex: none;
		display: flex;
		padding: 8px 4px;
		background: #cbcbcb;
	}
	.controls {
		display: flex;
		align-self: flex-start;
		padding-right: 13px;
	}
	.controls button {
		width: 25px;
		height: 26px;
		justify-content: center;
	}
	ol {
		display: flex;
		flex: 1;
		min-width: 0;
	}
	ol svg {
		overflow: visible;
	}
	.settings {
		align-self: flex-start;
		height: 24px;
	}
</style>
